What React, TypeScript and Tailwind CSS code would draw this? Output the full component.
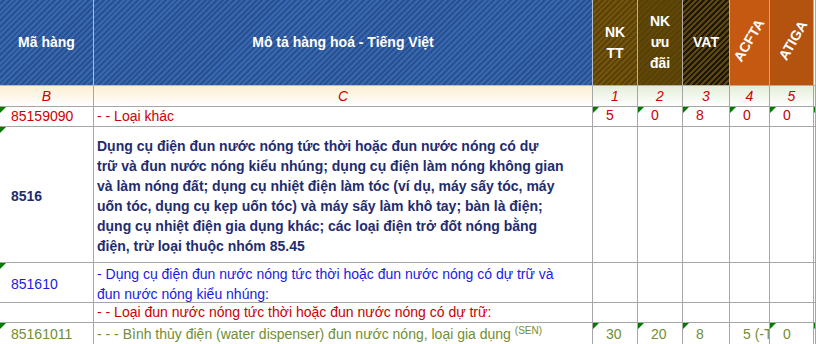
import React from 'react';

type CellProps = {
  children?: React.ReactNode;
  className?: string;
  tri?: boolean;
};

const Cell: React.FC<CellProps> = ({ children, className = '', tri = false }) => (
  <div className={`relative overflow-hidden border-r border-b border-[#a6a6a6] ${className}`}>
    {tri && (
      <span className="absolute left-0 top-0 h-0 w-0 border-t-[6px] border-r-[6px] border-t-[#007a00] border-r-transparent" />
    )}
    {children}
  </div>
);

const cols = 'grid grid-cols-[94px_499px_45px_45px_47px_40px_44px_1fr]';

const blueHatch =
  'bg-[repeating-linear-gradient(135deg,#3667b0_0px,#3667b0_2px,#29508f_2px,#29508f_4px)]';
const nkHatch =
  'bg-[repeating-linear-gradient(135deg,#73540c_0px,#73540c_2px,#5a4108_2px,#5a4108_4px)]';
const nkudHatch =
  'bg-[repeating-linear-gradient(135deg,#614808_0px,#614808_2px,#564006_2px,#564006_4px)]';
const vatHatch =
  'bg-[repeating-linear-gradient(135deg,#5e4610_0px,#5e4610_2px,#1d1707_2px,#1d1707_4px)]';

const numCell = 'pl-[13px] flex items-end pb-[1px] leading-[19px]';

export default function App() {
  return (
    <div className="w-[816px] h-[344px] overflow-hidden bg-white font-['Liberation_Sans',Arial,sans-serif] text-[14px]">
      {/* header */}
      <div className={`${cols} h-[86px] text-white font-bold leading-[21px]`}>
        <Cell className={`${blueHatch} border-[#b4bccb] flex items-center justify-center`}>Mã hàng</Cell>
        <Cell className={`${blueHatch} border-[#b4bccb] flex items-center justify-center`}>
          Mô tả hàng hoá - Tiếng Việt
        </Cell>
        <Cell className={`${nkHatch} border-[#b4b0a6] flex flex-col items-center justify-center`}>
          <span>NK</span>
          <span>TT</span>
        </Cell>
        <Cell className={`${nkudHatch} border-[#b4b0a6] flex flex-col items-center justify-center`}>
          <span>NK</span>
          <span>ưu</span>
          <span>đãi</span>
        </Cell>
        <Cell className={`${vatHatch} border-[#b4b0a6] flex items-center justify-center`}>VAT</Cell>
        <Cell className="bg-[#c65911] border-[#c9a58c] flex items-center justify-center pb-[4px]">
          <span className="inline-block -rotate-60 whitespace-nowrap">ACFTA</span>
        </Cell>
        <Cell className="bg-[#b4520f] border-[#c9a58c] flex items-center justify-center pb-[4px] pl-[4px]">
          <span className="inline-block -rotate-60 whitespace-nowrap">ATIGA</span>
        </Cell>
        <Cell className="bg-white" />
      </div>

      {/* column letters */}
      <div className={`${cols} h-[21px] italic text-[#cc0000] leading-[20px]`}>
        <Cell className="bg-linear-to-b from-[#fcefd3] to-white text-center">B</Cell>
        <Cell className="bg-linear-to-b from-[#fcefd3] to-white text-center">C</Cell>
        <Cell className="bg-linear-to-b from-[#e4eed9] to-white text-center">1</Cell>
        <Cell className="bg-linear-to-b from-[#e4eed9] to-white text-center">2</Cell>
        <Cell className="bg-linear-to-b from-[#e4eed9] to-white text-center">3</Cell>
        <Cell className="bg-linear-to-b from-[#e4eed9] to-white text-center">4</Cell>
        <Cell className="bg-linear-to-b from-[#e4eed9] to-white text-center">5</Cell>
        <Cell className="bg-linear-to-b from-[#e4eed9] to-white" />
      </div>

      {/* 85159090 */}
      <div className={`${cols} h-[20px] text-[#cc0000] leading-[19px]`}>
        <Cell tri className="pl-[11px] flex items-end">85159090</Cell>
        <Cell className="pl-[3px] flex items-end">- - Loại khác</Cell>
        <Cell tri className={numCell}>5</Cell>
        <Cell tri className={numCell}>0</Cell>
        <Cell tri className={numCell}>8</Cell>
        <Cell tri className={numCell}>0</Cell>
        <Cell tri className={numCell}>0</Cell>
        <Cell tri />
      </div>

      {/* 8516 */}
      <div className={`${cols} h-[136px] text-[#1f2c6e] font-bold leading-[20px]`}>
        <Cell tri className="pl-[11px] flex items-center pt-[2px]">8516</Cell>
        <Cell className="pl-[3px] flex flex-col justify-center pt-[3px]">
          <span>Dụng cụ điện đun nước nóng tức thời hoặc đun nước nóng có dự</span>
          <span>trữ và đun nước nóng kiểu nhúng; dụng cụ điện làm nóng không gian</span>
          <span>và làm nóng đất; dụng cụ nhiệt điện làm tóc (ví dụ, máy sấy tóc, máy</span>
          <span>uốn tóc, dụng cụ kẹp uốn tóc) và máy sấy làm khô tay; bàn là điện;</span>
          <span>dụng cụ nhiệt điện gia dụng khác; các loại điện trở đốt nóng bằng</span>
          <span>điện, trừ loại thuộc nhóm 85.45</span>
        </Cell>
        <Cell />
        <Cell />
        <Cell />
        <Cell />
        <Cell />
        <Cell />
      </div>

      {/* 851610 */}
      <div className={`${cols} h-[40px] text-[#1a1ae6] leading-[20px]`}>
        <Cell tri className="pl-[11px] flex items-center pt-[2px]">851610</Cell>
        <Cell className="pl-[3px] pt-[1px]">
          <span className="block">- Dụng cụ điện đun nước nóng tức thời hoặc đun nước nóng có dự trữ và</span>
          <span className="block">đun nước nóng kiểu nhúng:</span>
        </Cell>
        <Cell />
        <Cell />
        <Cell />
        <Cell />
        <Cell />
        <Cell />
      </div>

      {/* loai dun */}
      <div className={`${cols} h-[20px] text-[#cc0000] leading-[19px]`}>
        <Cell />
        <Cell className="pl-[3px] flex items-end whitespace-nowrap">
          - - Loại đun nước nóng tức thời hoặc đun nước nóng có dự trữ:
        </Cell>
        <Cell />
        <Cell />
        <Cell />
        <Cell />
        <Cell />
        <Cell />
      </div>

      {/* 85161011 */}
      <div className={`${cols} h-[24px] text-[#728d33] leading-[20px]`}>
        <Cell tri className="pl-[11px] pt-[1px]">85161011</Cell>
        <Cell className="pl-[3px] pt-[1px] whitespace-nowrap">
          - - - Bình thủy điện (water dispenser) đun nước nóng, loại gia dụng{' '}
          <sup className="text-[10px]">(SEN)</sup>
        </Cell>
        <Cell tri className="pl-[13px] pt-[1px]">30</Cell>
        <Cell tri className="pl-[13px] pt-[1px]">20</Cell>
        <Cell tri className="pl-[13px] pt-[1px]">8</Cell>
        <Cell className="pl-[13px] pt-[1px] whitespace-nowrap">5 (-TH)</Cell>
        <Cell tri className="pl-[13px] pt-[1px]">0</Cell>
        <Cell tri />
      </div>
    </div>
  );
}
